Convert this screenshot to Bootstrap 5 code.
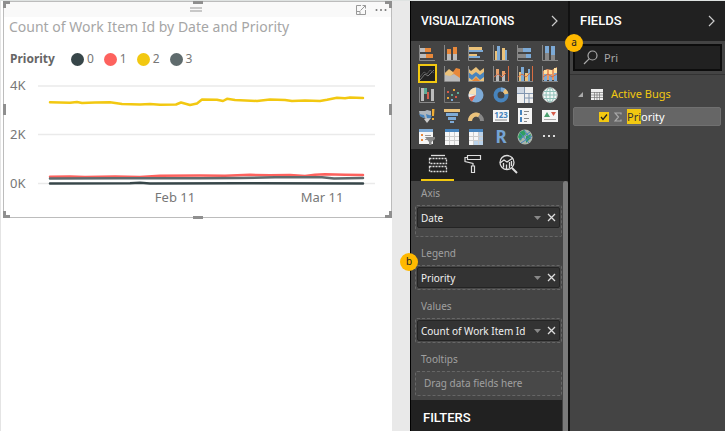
<!DOCTYPE html>
<html lang="en">
<head>
<meta charset="utf-8">
<meta name="viewport" content="width=device-width, initial-scale=1">
<title>Report editor</title>
<link href="https://cdn.jsdelivr.net/npm/bootstrap@5.3.0/dist/css/bootstrap.min.css" rel="stylesheet">
<style>
body{font-family:"Noto Sans","Open Sans",sans-serif;font-size:11px;line-height:16px;background:#e9e9e9;color:#e6e6e6;border-top:1px solid #dfe3e2}
.report-area{border-right:1px solid #000;padding-right:18px;min-width:0}
.sheet{border-left:1px solid #e4e4e4;padding-left:2px}
.visual{border:1px solid #bcbcbc;color:#777;font-size:13px}
.visual-bar{height:15px;background:#f9f9f9}
.bar-side{width:28px}
.grip{width:12px;height:5px;border:solid #c8c8c8;border-width:2px 0}
.visual-title{font-size:14px;line-height:20px;color:#a6a6a6;padding-left:5px}
.legend{font-size:12px;line-height:18px;gap:10px;padding:13px 0 0 6px}
.legend-name{color:#666;font-size:12px;margin-right:6px}
.legend-item{gap:3px}
.dot{width:13px;height:13px;border-radius:50%}
.handle{position:absolute;border:0 solid #8f8f8f}
.h-tl{left:-1px;top:-1px;width:7px;height:7px;border-width:3px 0 0 3px}
.h-tr{right:-1px;top:-1px;width:7px;height:7px;border-width:3px 3px 0 0}
.h-bl{left:-1px;bottom:-1px;width:7px;height:7px;border-width:0 0 3px 3px}
.h-br{right:-1px;bottom:-1px;width:7px;height:7px;border-width:0 3px 3px 0}
.h-t,.h-b{left:50%;margin-left:-5px;width:10px;border-top-width:3px}
.h-t{top:-1px}.h-b{bottom:-2px}
.h-l,.h-r{top:50%;margin-top:-6px;height:11px;border-left-width:3px}
.h-l{left:-1px}.h-r{right:-1px}
.pane{flex:0 0 157px;background:#444}
.fields-pane{border-left:2px solid #111}
.pane-head{height:40px;background:#212121;color:#fff;padding:0 10px}
.pane-head h2,.filters h2{font:500 13px/16px Roboto,sans-serif;margin:0}
.pane-head .long-title{font-size:12px}
.plain{background:none;border:0;padding:0;color:inherit;line-height:0}
.gallery{display:grid;grid-template-columns:repeat(6,1fr);grid-auto-rows:21px;padding:1px 6px 2px 4px;justify-items:center;align-items:center}
.gallery button{width:19px;height:19px}
.gallery .chosen{background:#222;outline:2px solid #f2c811;outline-offset:-2px}
.modes{height:32px;background:#212121;padding-left:10px;gap:2px}
.modes button{width:33px;border-bottom:2px solid transparent}
.modes .chosen{border-color:#f2c811}
.wells{padding:0 6px 0 4px}
.well-label{line-height:24px;padding-left:6px;color:#a0a0a0;font-size:10px}
.well{border:1px dashed #666;border-radius:2px;padding:1px;min-height:25px;margin-bottom:4px;background:#484848}
.well.tall{min-height:32px}
.pill{height:21px;background:#333;border:1px solid #242424;border-radius:2px;padding:0 3px;font-size:10px;color:#f0f0f0;gap:6px}
.hint{padding:2px 7px;line-height:17px;color:#a0a0a0;font-size:10px}
.filters{background:#212121;color:#fff;padding:10px 12px;margin-right:6px}
.scroll-thumb{position:absolute;right:0;top:0;bottom:2px;width:5px;border-radius:3px;background:#7b7b7b}
.search-wrap{padding:3px;border-bottom:1px solid #333}
.search{background:#212121;border:2px solid #0d0d0d;height:27px;padding:0 8px;gap:6px}
.search input{background:none;border:0;outline:0;padding:0;color:#a8a8a8;width:100%;min-width:0;font-size:11px}
.tree{padding:9px 4px 0 3px}
.tree-head{height:20px;color:#f2c811;gap:8px;padding-left:5px;margin-bottom:3px}
.tree-item{background:#666;border:1px solid #707070;border-radius:2px;height:19px;padding-left:25px;color:#fff;gap:5px}
.tree-item input{appearance:none;width:10px;height:10px;margin:0;background:#f2c811 url("data:image/svg+xml,%3Csvg xmlns='http://www.w3.org/2000/svg' viewBox='0 0 10 10'%3E%3Cpath d='M2 5l2 2.500 4-5' fill='none' stroke='%23222' stroke-width='1.300'/%3E%3C/svg%3E")}
.hit{background:#f2c811;color:#333}
.step{position:absolute;width:18px;height:18px;border-radius:50%;background:#ffb900;color:#222;font-size:10px;line-height:17px;text-align:center;z-index:2}
.step-a{left:-5px;top:33px}
.step-b{left:-11px;top:252px}
</style>
<script src="https://cdn.jsdelivr.net/npm/bootstrap@5.3.0/dist/js/bootstrap.bundle.min.js"></script>
</head>
<body>
<div class="d-flex min-vh-100">
<main class="report-area flex-grow-1 d-flex">
<div class="sheet bg-white flex-grow-1">
<section class="visual position-relative bg-white">
  <div class="visual-bar d-flex align-items-center justify-content-between px-1">
    <span class="bar-side"></span><span class="grip"></span>
    <span class="d-flex align-items-center gap-2">
      <button class="plain" aria-label="Focus mode"><svg width="12" height="12" viewBox="0 0 12 12" fill="none" stroke="#999"><path d="M6 1.500H1.500V10.500H10.500V6M1.500 7.500H5V10.500M5.500 6.500L10.500 1.500M7.500 1.500H10.500V4.500"/></svg></button>
      <button class="plain" aria-label="More options"><svg width="12" height="12" viewBox="0 0 12 12" fill="#777"><circle cx="1.500" cy="6" r="1"/><circle cx="6" cy="6" r="1"/><circle cx="10.500" cy="6" r="1"/></svg></button>
    </span>
  </div>
  <div class="visual-title text-nowrap">Count of Work Item Id by Date and Priority</div>
  <div class="legend d-flex align-items-center">
    <span class="legend-name fw-bold">Priority</span>
    <span class="legend-item d-flex align-items-center"><i class="dot" style="background:#374649"></i>0</span>
    <span class="legend-item d-flex align-items-center"><i class="dot" style="background:#fd625e"></i>1</span>
    <span class="legend-item d-flex align-items-center"><i class="dot" style="background:#f2c811"></i>2</span>
    <span class="legend-item d-flex align-items-center"><i class="dot" style="background:#5f6b6d"></i>3</span>
  </div>
  <svg class="d-block w-100" viewBox="4 68 387 149" role="img" aria-label="Line chart of work item count by date">
    <path d="M38 86H375M38 134.500H375M38 183.500H375" stroke="#eaeaea" stroke-width="1.300"/>
    <g fill="#777" font-size="13"><text x="10" y="90">4K</text><text x="10" y="139">2K</text><text x="10" y="188">0K</text>
    <text x="175" y="202" text-anchor="middle">Feb 11</text><text x="322" y="202" text-anchor="middle">Mar 11</text></g>
    <g fill="none" stroke-width="2.500" stroke-linecap="round" stroke-linejoin="round">
      <path stroke="#fd625e" d="M50 176.800L70 176.500L85 177L115 176.500L140 177L160 175.800L200 175.500L225 175.800L250 174.800L270 175.300L290 175L305 176L315 174.800L325 174.200L345 174.800L363 175"/>
      <path stroke="#5f6b6d" d="M50 178.500L120 178.300L200 178.200L240 178L275 177.200L322 177.200L334 178.400L363 178"/>
      <path stroke="#374649" d="M50 183.500L130 183.200L140 182.800L150 183.400L240 183.200L363 183.400"/>
      <path stroke="#f2c811" d="M50 102.200L70 102.700L77 102L82 103L95 102.500L110 102.200L122 104L140 104.500L150 104L160 104.700L176 104.500L181 102.500L190 105L197 103.500L202 99.500L217 99.700L223 101L227 98.800L235 100L257 101L270 99.600L285 100L292 101L305 100.500L320 101L327 99.800L337 97.800L345 98.200L350 97.500L363 98"/>
    </g>
  </svg>
  <span class="handle h-tl"></span><span class="handle h-t"></span><span class="handle h-tr"></span><span class="handle h-l"></span><span class="handle h-r"></span><span class="handle h-bl"></span><span class="handle h-b"></span><span class="handle h-br"></span>
</section>
</div>
</main>

<aside class="pane position-relative">
  <span class="step step-b">b</span>
  <div class="pane-head d-flex align-items-center justify-content-between"><h2 class="long-title">VISUALIZATIONS</h2>
    <button class="plain" aria-label="Collapse visualizations"><svg width="7" height="12" viewBox="0 0 7 12" fill="none" stroke="#ccc" stroke-width="1.200"><path d="M1 1L6 6L1 11"/></svg></button></div>
  <div class="gallery">
    <button class="plain" aria-label="Stacked bar chart"><svg width="16" height="16" viewBox="0 0 16 16"><path d="M.5 0V15.500H16" fill="none" stroke="#888"/><path d="M1 3h5v4H1zM1 9h6v4H1z" fill="#bbb"/><path d="M6 3h6v4H6zM7 9h7v4H7z" fill="#e8883a"/></svg></button>
    <button class="plain" aria-label="Stacked column chart"><svg width="16" height="16" viewBox="0 0 16 16"><path d="M.5 0V15.500H16" fill="none" stroke="#888"/><path d="M3 9h4v6H3zM9 8h4v7H9z" fill="#bbb"/><path d="M3 4h4v5H3zM9 2h4v7H9z" fill="#e8883a"/></svg></button>
    <button class="plain" aria-label="Clustered bar chart"><svg width="16" height="16" viewBox="0 0 16 16"><path d="M.5 0V15.500H16" fill="none" stroke="#888"/><path d="M1 2h13v3H1zM1 9h8v2H1z" fill="#ebc27a"/><path d="M1 5h14v2H1zM1 11h11v2H1z" fill="#7daad6"/></svg></button>
    <button class="plain" aria-label="Clustered column chart"><svg width="16" height="16" viewBox="0 0 16 16"><path d="M.5 0V15.500H16" fill="none" stroke="#888"/><path d="M2 6h2v9H2zM9 3h3v12H9z" fill="#ebc27a"/><path d="M4 1h3v14H4zM12 5h2v10h-2z" fill="#7daad6"/></svg></button>
    <button class="plain" aria-label="Hundred percent bar chart"><svg width="16" height="16" viewBox="0 0 16 16"><path d="M.5 0V15.500H16" fill="none" stroke="#888"/><path d="M1 3h5v4H1zM1 9h8v4H1z" fill="#888"/><path d="M6 3h8v4H6zM9 9h5v4H9z" fill="#7daad6"/></svg></button>
    <button class="plain" aria-label="Hundred percent column chart"><svg width="16" height="16" viewBox="0 0 16 16"><path d="M.5 0V15.500H16" fill="none" stroke="#888"/><path d="M3 8h4v7H3zM9 10h4v5H9z" fill="#888"/><path d="M3 1h4v7H3zM9 1h4v9H9z" fill="#7daad6"/></svg></button>

    <button class="plain chosen" aria-label="Line chart"><svg width="16" height="16" viewBox="0 0 16 16" fill="none"><path d="M1 14L6 8L9 10L15 4" stroke="#777"/><path d="M1 11L5 6L8 8L11 4L15 7" stroke="#555"/></svg></button>
    <button class="plain" aria-label="Area chart"><svg width="16" height="16" viewBox="0 0 16 16"><path d="M1 7L5 4L9 6L12 2L16 3V12L1 13z" fill="#e8883a"/><path d="M1 7L5 3L10 7L6 11L1 10z" fill="#ebc27a"/><path d="M1 9L6 10L10 8L16 12V15H1z" fill="#bbb"/><path d="M.5 0V15.500H16" fill="none" stroke="#888"/></svg></button>
    <button class="plain" aria-label="Stacked area chart"><svg width="16" height="16" viewBox="0 0 16 16"><path d="M0 2L3 5L8 1L12 5L16 2V15H0z" fill="#ebc27a"/><path d="M0 6L4 9L8 6L12 9L16 6V11L12 14L8 10L4 14L0 11z" fill="#4784bd"/><path d="M4 15L8 11L12 15z" fill="#e8883a"/><path d="M.5 0V15.500H16" fill="none" stroke="#888"/></svg></button>
    <button class="plain" aria-label="Line and stacked column chart"><svg width="16" height="16" viewBox="0 0 16 16"><path d="M.5 0V15.500H16" fill="none" stroke="#888"/><path d="M3 5h3v10H3zM9 7h3v8H9z" fill="#bbb"/><path d="M3 3h3v5H3zM9 5h3v4H9z" fill="#e8a06a"/><path d="M1 11L5 8L9 11L13 7M15.500 0V15" fill="none" stroke="#d86d42"/></svg></button>
    <button class="plain" aria-label="Line and clustered column chart"><svg width="16" height="16" viewBox="0 0 16 16"><path d="M.5 0V15.500H16" fill="none" stroke="#888"/><path d="M2 6h2v9H2zM8 7h3v8H8z" fill="#ebc27a"/><path d="M4 1h3v14H4zM11 3h2v12h-2z" fill="#7daad6"/><path d="M1 11L5 8L9 11L13 7M15.500 0V15" fill="none" stroke="#d86d42"/></svg></button>
    <button class="plain" aria-label="Ribbon chart"><svg width="16" height="16" viewBox="0 0 16 16"><path d="M1 5L5 3L10 4L15 1V14H1z" fill="#e79763"/><path d="M2 8h3v7H2zM7 9h3v6H7zM12 7h3v8h-3z" fill="#7daad6"/><path d="M2 4h3v4H2zM7 4h3v4H7zM12 2h3v5h-3z" fill="#ffe0a0"/><path d="M1 11L6 8L10 11L15 8" fill="none" stroke="#d86d42"/><path d="M.5 0V15.500H16" fill="none" stroke="#888"/></svg></button>

    <button class="plain" aria-label="Waterfall chart"><svg width="16" height="16" viewBox="0 0 16 16"><path d="M.5 0V15.500H16" fill="none" stroke="#888"/><path d="M2 1h3v13H2zM12 2h3v12h-3z" fill="#bbb"/><path d="M5 1h3v6H5z" fill="#5eac96"/><path d="M8 5h2v7H8z" fill="#d65c4b"/><path d="M10 3h2v10h-2z" fill="#444"/></svg></button>
    <button class="plain" aria-label="Scatter chart"><svg width="16" height="16" viewBox="0 0 16 16"><path d="M.5 0V15.500H16" fill="none" stroke="#777"/><path d="M3 4h2v2H3zM11 9h2v2h-2z" fill="#d65c4b"/><path d="M7 7h2v2H7zM13 5h2v2h-2z" fill="#5eac96"/><path d="M9 2h2v2H9zM3 10h2v2H3z" fill="#e8a83a"/><path d="M7 12h2v2H7z" fill="#7daad6"/></svg></button>
    <button class="plain" aria-label="Pie chart"><svg width="16" height="16" viewBox="0 0 16 16"><circle cx="8" cy="8" r="7.500" fill="#7daad6"/><path d="M8 8V.5A7.500 7.500 0 0 0 .7 7z" fill="#f8dfb4"/><path d="M8 8L.7 7A7.500 7.500 0 0 0 4 14.500z" fill="#f1eee8"/><path d="M8 8L1 10.500A7.500 7.500 0 0 0 4 14.500z" fill="#d65c4b"/></svg></button>
    <button class="plain" aria-label="Donut chart"><svg width="16" height="16" viewBox="0 0 16 16" fill="none" stroke-width="4"><circle cx="8" cy="8" r="5.500" stroke="#4784bd"/><path d="M8 2.500A5.500 5.500 0 0 1 12 4" stroke="#7daad6"/><path d="M11 3.500A5.500 5.500 0 0 1 13.500 7" stroke="#ebc27a"/></svg></button>
    <button class="plain" aria-label="Treemap"><svg width="16" height="16" viewBox="0 0 16 16"><path d="M0 0h16v16H0z" fill="#eee"/><path d="M0 0h7v6H0z" fill="#cdd6e2"/><path d="M7.500 0V16M0 6.500H16M12 7V16M7 11H16" stroke="#8296b0"/></svg></button>
    <button class="plain" aria-label="Map"><svg width="16" height="16" viewBox="0 0 16 16" fill="none"><circle cx="8" cy="8" r="7.300" fill="#f1f7f5" stroke="#bbb"/><path d="M2 4.500H14M1 8H15M2 11.500H14M8 1V15" stroke="#8fc0b8"/><ellipse cx="8" cy="8" rx="4" ry="7" stroke="#8fc0b8"/></svg></button>

    <button class="plain" aria-label="Filled map"><svg width="16" height="16" viewBox="0 0 16 16"><path d="M0 3L6 3L8 2L12 3V7L9 12L5 10L1 8z" fill="#aeb6bd"/><path d="M0 6L5 7L6 10L2 9zM7 6L13 8L11 11L8 10z" fill="#4784bd"/><path d="M5 11L12 10L8 15z" fill="#ccc"/><path d="M13 1h2.500L15 8H13zM13 10h2v2h-2z" fill="#efae36"/></svg></button>
    <button class="plain" aria-label="Funnel"><svg width="16" height="16" viewBox="0 0 16 16"><path d="M0 1h16v3H0z" fill="#ebc27a"/><path d="M2 5h12v3H2zM4 9h8v3H4zM6 13h4v2H6z" fill="#7daad6"/></svg></button>
    <button class="plain" aria-label="Gauge"><svg width="16" height="16" viewBox="0 0 16 16" fill="none" stroke-width="4"><path d="M2 13A6 6.500 0 0 1 14 13" stroke="#888"/><path d="M2 13A6 6.500 0 0 1 11 7.500" stroke="#ebc27a"/></svg></button>
    <button class="plain" aria-label="Card"><svg width="16" height="16" viewBox="0 0 16 16"><path d="M0 2h16v12H0z" fill="#f5f5f5"/><text x="8" y="10" text-anchor="middle" font-size="8" font-weight="700" fill="#4784bd">123</text><path d="M2 12H14" stroke="#888"/></svg></button>
    <button class="plain" aria-label="Multi-row card"><svg width="16" height="16" viewBox="0 0 16 16"><path d="M1 0h14v16H1z" fill="#f5f5f5"/><path d="M3 2h2v5H3zM3 9h2v5H3z" fill="#4784bd"/><path d="M7 3.500H12M7 6.500H10M7 10.500H12M7 13.500H10" stroke="#888"/></svg></button>
    <button class="plain" aria-label="KPI"><svg width="16" height="16" viewBox="0 0 16 16"><path d="M0 2h16v12H0z" fill="#f5f5f5"/><path d="M2 9L5 4L8 9z" fill="#4ba06f"/><path d="M9 4h5L11.500 8z" fill="#d65c4b"/><path d="M2 11.500H14" stroke="#aaa"/></svg></button>

    <button class="plain" aria-label="Slicer"><svg width="16" height="16" viewBox="0 0 16 16"><path d="M0 0h14v15H0z" fill="#f5f5f5"/><path d="M0 0h14v3H0z" fill="#7daad6"/><path d="M2 5h2v2H2zM2 10h2v2H2z" fill="#e8883a"/><path d="M6 6.500H12M6 10.500H9" stroke="#999"/><path d="M6 8H16V10L12.500 13V16H10V13z" fill="#888"/></svg></button>
    <button class="plain" aria-label="Table"><svg width="16" height="16" viewBox="0 0 16 16"><path d="M1 0h14v16H1z" fill="#f7f7f7"/><path d="M1 0h14v3H1z" fill="#4784bd"/><path d="M1 7.500H15M1 11.500H15M5.500 3V16M10.500 3V16" stroke="#ccc"/></svg></button>
    <button class="plain" aria-label="Matrix"><svg width="16" height="16" viewBox="0 0 16 16"><path d="M1 0h14v16H1z" fill="#f7f7f7"/><path d="M1 0h14v3H1z" fill="#4784bd"/><path d="M10 3h5v13h-5zM5 12h10v4H5z" fill="#b9d1e9"/><path d="M1 7.500H15M1 11.500H15M5.500 3V16M10.500 3V16" stroke="#ccc"/></svg></button>
    <button class="plain" aria-label="R script visual"><svg class="overflow-visible" width="16" height="16" viewBox="0 0 16 16"><text x="8" y="14" text-anchor="middle" font-size="17" font-weight="700" fill="#76a4d4">R</text></svg></button>
    <button class="plain" aria-label="ArcGIS map"><svg width="16" height="16" viewBox="0 0 16 16"><circle cx="8" cy="8" r="7.500" fill="#a9b5ab"/><path d="M3 3L7 1L9 5L5 8L4 12L1 8zM9 7L14 5L13 10L9 14z" fill="#2f9e62"/><path d="M2 11L13 3M4 14L15 7M3 4L12 14M7 1L14 10" stroke="#4784bd"/></svg></button>
    <button class="plain" aria-label="More visuals"><svg width="16" height="16" viewBox="0 0 16 16" fill="#ddd"><path d="M1 6h2v2H1zM6 6h2v2H6zM11 6h2v2h-2z"/></svg></button>
  </div>
  <div class="modes d-flex">
    <button class="plain chosen" aria-label="Fields"><svg width="20" height="20" viewBox="0 0 20 20" fill="none" stroke="#ddd" stroke-width="1.300"><path d="M3 1.500H17"/><path d="M1.500 4.500H18.500V9.500H1.500zM1.500 12.500H18.500V17.500H1.500z" stroke-dasharray="2 1"/></svg></button>
    <button class="plain" aria-label="Format"><svg width="20" height="20" viewBox="0 0 20 20" fill="none" stroke="#ddd" stroke-width="1.200"><path d="M4.500 1.500H17.500V5.500H4.500zM4.500 3.500H2V7.500L10 9.500V12M8.500 12H11.500V18.500H8.500z"/></svg></button>
    <button class="plain" aria-label="Analytics"><svg width="20" height="20" viewBox="0 0 20 20" fill="none" stroke="#ddd" stroke-width="1.300"><circle cx="9" cy="8.500" r="7"/><path d="M14 14L19 19" stroke-width="2"/><path d="M2 9L6 6L9 8L15 4M5.500 9V13.500M8.500 10.500V15M11.500 8V14M13.500 7V12"/></svg></button>
  </div>
  <div class="position-relative">
    <div class="wells">
      <div class="well-label">Axis</div>
      <div class="well tall"><div class="pill d-flex align-items-center"><span class="me-auto text-nowrap">Date</span><button class="plain" aria-label="Date options"><svg width="7" height="4"><path d="M0 0H7L3.500 4z" fill="#888"/></svg></button><button class="plain" aria-label="Remove Date"><svg width="9" height="9" stroke="#ddd" stroke-width="1.300"><path d="M1 1L8 8M8 1L1 8"/></svg></button></div></div>
      <div class="well-label">Legend</div>
      <div class="well"><div class="pill d-flex align-items-center"><span class="me-auto text-nowrap">Priority</span><button class="plain" aria-label="Priority options"><svg width="7" height="4"><path d="M0 0H7L3.500 4z" fill="#888"/></svg></button><button class="plain" aria-label="Remove Priority"><svg width="9" height="9" stroke="#ddd" stroke-width="1.300"><path d="M1 1L8 8M8 1L1 8"/></svg></button></div></div>
      <div class="well-label">Values</div>
      <div class="well"><div class="pill d-flex align-items-center"><span class="me-auto text-nowrap">Count of Work Item Id</span><button class="plain" aria-label="Count options"><svg width="7" height="4"><path d="M0 0H7L3.500 4z" fill="#888"/></svg></button><button class="plain" aria-label="Remove Count"><svg width="9" height="9" stroke="#ddd" stroke-width="1.300"><path d="M1 1L8 8M8 1L1 8"/></svg></button></div></div>
      <div class="well-label">Tooltips</div>
      <div class="well"><div class="hint">Drag data fields here</div></div>
    </div>
    <div class="filters"><h2>FILTERS</h2></div>
    <span class="scroll-thumb"></span>
  </div>
</aside>

<aside class="pane fields-pane position-relative">
  <span class="step step-a">a</span>
  <div class="pane-head d-flex align-items-center justify-content-between"><h2>FIELDS</h2>
    <button class="plain" aria-label="Collapse fields"><svg width="7" height="12" viewBox="0 0 7 12" fill="none" stroke="#ccc" stroke-width="1.200"><path d="M1 1L6 6L1 11"/></svg></button></div>
  <div class="search-wrap"><div class="search d-flex align-items-center">
    <svg class="flex-shrink-0" width="15" height="15" viewBox="0 0 15 15" fill="none" stroke="#aaa" stroke-width="1.200"><circle cx="9.500" cy="5.500" r="4.500"/><path d="M6.300 8.700L1 14"/></svg>
    <input type="text" value="Pri" aria-label="Search fields"></div></div>
  <div class="tree">
    <div class="tree-head d-flex align-items-center"><svg width="5" height="5"><path d="M5 0V5H0z" fill="#aaa"/></svg>
      <svg width="12" height="11" viewBox="0 0 12 11"><path d="M0 0h12v11H0z" fill="#eee"/><path d="M0 3.500H12M0 6H12M0 8.500H12M3.500 3V11M6 3V11M8.500 3V11" stroke="#777" stroke-width=".7"/></svg>
      <span>Active Bugs</span></div>
    <div class="tree-item d-flex align-items-center"><input type="checkbox" id="f-priority" checked>
      <svg width="8" height="10" viewBox="0 0 8 10" fill="none" stroke="#aaa" stroke-width="1.200"><path d="M7 2.500V1H1L4.500 5L1 9H7V7.500"/></svg>
      <label for="f-priority"><span class="hit">Pri</span>ority</label></div>
  </div>
</aside>
</div>
</body>
</html>
